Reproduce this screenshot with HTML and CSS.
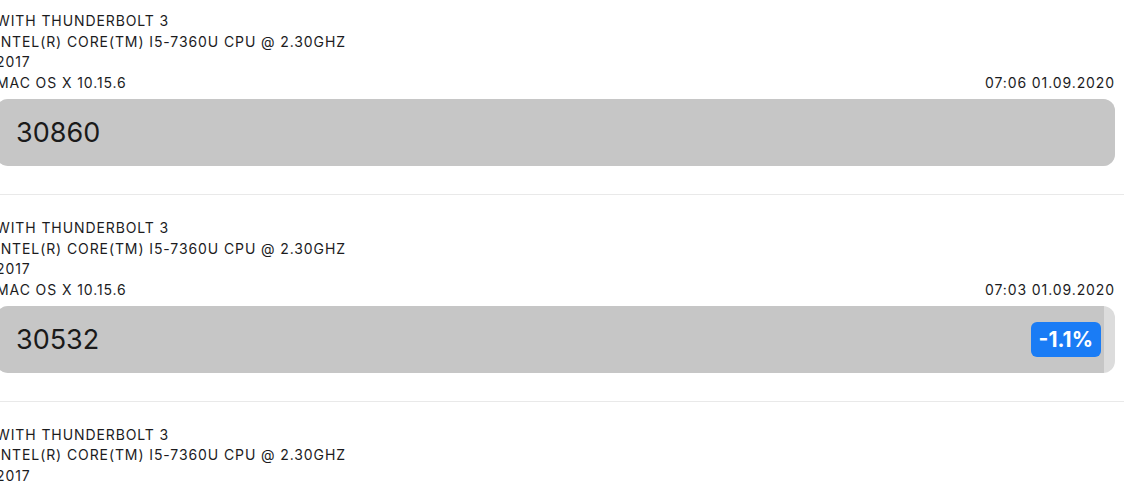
FILE: index.html
```html
<!DOCTYPE html>
<html lang="en">
<head>
  <meta charset="UTF-8">
  <meta name="viewport" content="width=device-width, initial-scale=1.0">
  <title>Benchmark Results</title>
  <link rel="stylesheet" href="styles.css">
</head>
<body>
  <ul class="results">
    <li class="result">
      <div class="meta">
        <div>WITH THUNDERBOLT 3</div>
        <div>INTEL(R) CORE(TM) I5-7360U CPU @ 2.30GHZ</div>
        <div>2017</div>
        <div class="meta-last">
          <span>MAC OS X 10.15.6</span>
          <span>07:06 01.09.2020</span>
        </div>
      </div>
      <div class="bar">
        <div class="bar-fill" style="width: 100%"></div>
        <span class="score">30860</span>
      </div>
    </li>
    <li class="result">
      <div class="meta">
        <div>WITH THUNDERBOLT 3</div>
        <div>INTEL(R) CORE(TM) I5-7360U CPU @ 2.30GHZ</div>
        <div>2017</div>
        <div class="meta-last">
          <span>MAC OS X 10.15.6</span>
          <span>07:03 01.09.2020</span>
        </div>
      </div>
      <div class="bar">
        <div class="bar-fill" style="width: 99%"></div>
        <span class="score">30532</span>
        <span class="diff">-1.1%</span>
      </div>
    </li>
    <li class="result">
      <div class="meta">
        <div>WITH THUNDERBOLT 3</div>
        <div>INTEL(R) CORE(TM) I5-7360U CPU @ 2.30GHZ</div>
        <div>2017</div>
        <div class="meta-last">
          <span>MAC OS X 10.15.6</span>
          <span>07:01 01.09.2020</span>
        </div>
      </div>
    </li>
  </ul>
</body>
</html>
```

FILE: styles.css
```css
body {
  font-family: Inter, "Noto Sans", sans-serif;
  margin: 0;
  padding: 0;
  background-color: #fff;
  color: #1c1c1e;
  overflow: hidden;
}
.results {
  list-style: none;
  margin: -12px 0 0 0;
  padding: 0;
}
.result {
  padding: 22px 9px 28px 0;
  border-bottom: 1px solid #e9e9e9;
  margin-left: -4px;
}
.meta {
  font-size: 14px;
  line-height: 20.7px;
  letter-spacing: 0.9px;
  margin-bottom: 6px;
  padding-top: 1px;
}
.meta-last {
  display: flex;
  justify-content: space-between;
}
.bar {
  position: relative;
  height: 67px;
  margin-top: -1px;
  border-radius: 12px;
  background-color: #dcdcdc;
  overflow: hidden;
  display: flex;
  align-items: center;
}
.bar-fill {
  position: absolute;
  left: 0;
  top: 0;
  bottom: 0;
  background-color: #c6c6c6;
}
.score {
  position: relative;
  margin-left: 20px;
  font-size: 27px;
  color: #1a1a1a;
}
.diff {
  position: absolute;
  right: 14px;
  top: 16px;
  height: 35px;
  line-height: 35px;
  padding: 0 8px;
  border-radius: 6px;
  background-color: #1a7cf5;
  color: #fff;
  font-size: 21px;
  font-weight: 700;
}
```
